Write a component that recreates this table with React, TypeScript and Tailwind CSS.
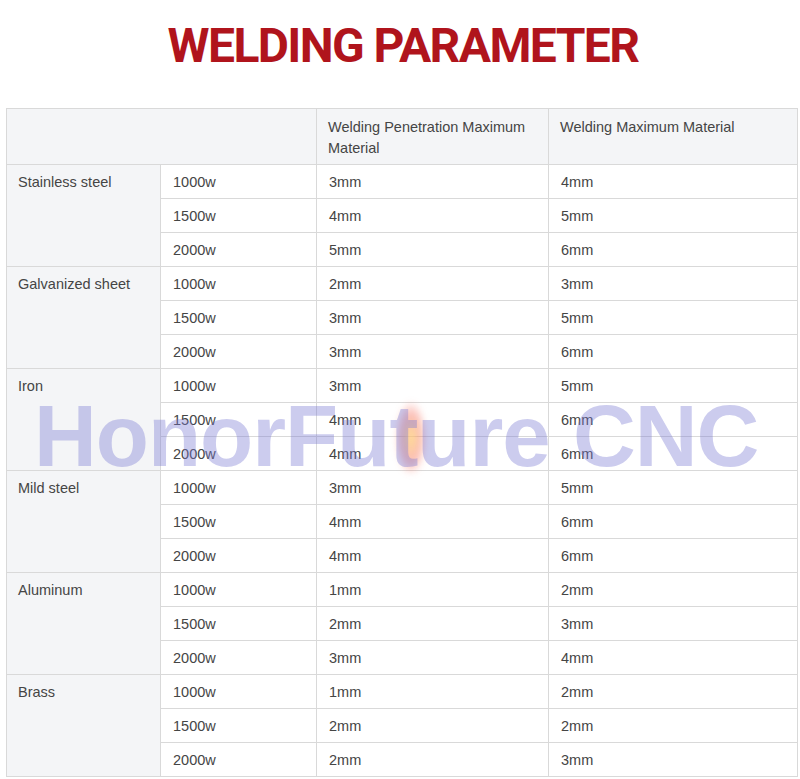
import React from 'react'

const groups = [
  { name: 'Stainless steel', rows: [['1000w', '3mm', '4mm'], ['1500w', '4mm', '5mm'], ['2000w', '5mm', '6mm']] },
  { name: 'Galvanized sheet', rows: [['1000w', '2mm', '3mm'], ['1500w', '3mm', '5mm'], ['2000w', '3mm', '6mm']] },
  { name: 'Iron', rows: [['1000w', '3mm', '5mm'], ['1500w', '4mm', '6mm'], ['2000w', '4mm', '6mm']] },
  { name: 'Mild steel', rows: [['1000w', '3mm', '5mm'], ['1500w', '4mm', '6mm'], ['2000w', '4mm', '6mm']] },
  { name: 'Aluminum', rows: [['1000w', '1mm', '2mm'], ['1500w', '2mm', '3mm'], ['2000w', '3mm', '4mm']] },
  { name: 'Brass', rows: [['1000w', '1mm', '2mm'], ['1500w', '2mm', '2mm'], ['2000w', '2mm', '3mm']] }
]

const cell = 'border border-[#d9d9d9] px-3 h-[34px] py-0 align-middle leading-[18px]'

export default function App() {
  return (
    <div className="relative w-[800px] h-[779px] bg-white overflow-hidden font-['Liberation_Sans',Arial,sans-serif]">
      <div className="h-[108px] flex items-center justify-center pb-[17px]">
        <h1 className="font-['Roboto',sans-serif] font-bold text-[48px] leading-none text-[#b0141c] tracking-[-1.6px] pl-[6px]">
          WELDING PARAMETER
        </h1>
      </div>

      <table className="ml-[6px] w-[791px] table-fixed border-collapse text-[14.5px] text-[#454545]">
        <colgroup>
          <col className="w-[154px]" />
          <col className="w-[156px]" />
          <col className="w-[232px]" />
          <col className="w-[249px]" />
        </colgroup>
        <thead>
          <tr className="bg-[#f4f5f7]">
            <th colSpan={2} className="border border-[#d9d9d9] h-[56px]" />
            <th className="border border-[#d9d9d9] h-[56px] pl-[11px] pr-3 pt-[8px] align-top text-left font-normal leading-[21px]">
              Welding Penetration Maximum Material
            </th>
            <th className="border border-[#d9d9d9] h-[56px] pl-[11px] pr-3 pt-[8px] align-top text-left font-normal leading-[21px]">
              Welding Maximum Material
            </th>
          </tr>
        </thead>
        <tbody>
          {groups.map(group =>
            group.rows.map((row, i) => (
              <tr key={group.name + row[0]}>
                {i === 0 && (
                  <td rowSpan={3} className="border border-[#d9d9d9] bg-[#f4f5f7] pl-[11px] pr-3 pt-[8px] align-top leading-[18px]">
                    {group.name}
                  </td>
                )}
                <td className={cell}>{row[0]}</td>
                <td className={cell}>{row[1]}</td>
                <td className={cell}>{row[2]}</td>
              </tr>
            ))
          )}
        </tbody>
      </table>

      {/* watermark */}
      <div className="pointer-events-none absolute left-[396px] top-[402px] w-[30px] h-[72px] rounded-full bg-[radial-gradient(ellipse_at_center,rgba(255,214,120,0.8),rgba(245,90,70,0.4)_45%,transparent_75%)] blur-[3px]" />
      <div className="pointer-events-none absolute left-[34px] top-[392px] font-['Liberation_Sans',Arial,sans-serif] font-bold text-[87px] leading-none text-[rgba(120,120,210,0.38)] tracking-[-1px] whitespace-nowrap">
        HonorFuture CNC
      </div>
    </div>
  )
}
